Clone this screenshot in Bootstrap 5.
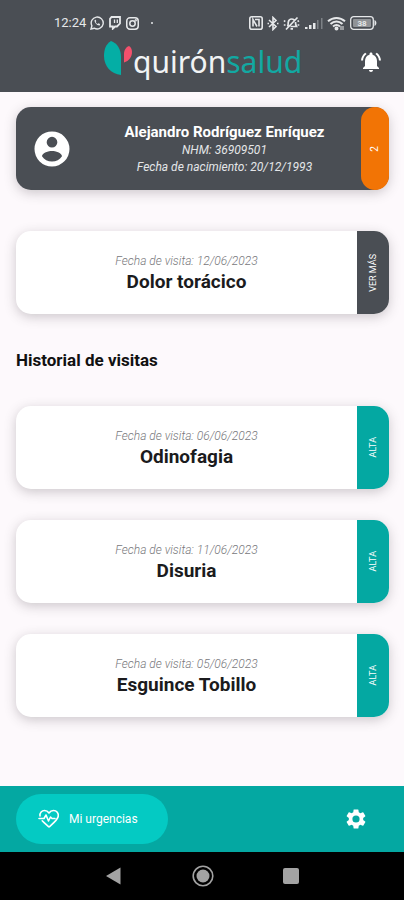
<!DOCTYPE html>
<html lang="es">
<head>
<meta charset="utf-8">
<meta name="viewport" content="width=device-width, initial-scale=1">
<title>Mi urgencias</title>
<link href="https://cdn.jsdelivr.net/npm/bootstrap@5.3.0/dist/css/bootstrap.min.css" rel="stylesheet">
<style>
  :root { --slate: #4a4e54; --teal: #04a8a2; --aqua: #04cac3; --orange: #f27405; }
  body { font-family: Roboto, "Noto Sans", sans-serif; background: #fdf9fc; color: #1b1b1d; }
  svg { display: block; flex: none; }
  .app-head { background: var(--slate); height: 92px; color: #fff; padding: 14px 27px 0 54px; }
  .status { height: 18px; font-size: 13px; line-height: 18px; color: #e6e8ea; }
  .brand-row { height: 60px; padding-left: 50px; margin-right: -6px; }
  .brand { font-family: "Noto Sans", sans-serif; font-size: 30px; line-height: 40px; color: #f1f3f4; }
  .brand-accent { color: #12a8a2; }
  .screen { padding: 15px 15px 0 16px; }
  .tile { height: 83px; border-radius: 15px; box-shadow: 0 3px 12px rgba(60, 50, 60, .25); background: #fff; }
  .tile-patient { background: var(--slate); color: #fff; padding-left: 16px; }
  .tile-name { font-size: 15px; line-height: 20px; font-weight: 700; }
  .tile-meta { font-size: 12px; line-height: 17px; font-style: italic; color: #e4e6e8; }
  .tile-date { font-size: 12px; line-height: 18px; font-style: italic; font-weight: 300; color: #77777b; }
  .tile-title { font-size: 19px; line-height: 24px; font-weight: 700; }
  .side { width: 32px; border: 0; border-radius: 0 15px 15px 0; color: #fff; font-size: 9px; line-height: 12px; background: var(--teal); }
  .side-dark { background: var(--slate); }
  .side-level { width: 28px; border-radius: 14px; background: var(--orange); font-size: 10px; }
  .side-text { writing-mode: vertical-rl; transform: rotate(180deg); }
  .section-title { font-size: 17px; line-height: 20px; font-weight: 700; color: #111; }
  .gap-first { margin-top: 41px; }
  .gap-title { margin: 36px 0; }
  .visits { gap: 31px; }
  .tabs { background: var(--teal); height: 66px; padding: 0 36px 0 16px; }
  .tab-pill { width: 152px; height: 50px; border-radius: 25px; background: var(--aqua); color: #fff; font-size: 12px; gap: 9px; padding-left: 22px; }
  .sys { background: #000; height: 48px; padding: 0 104px 0 105px; }
</style>
<script src="https://cdn.jsdelivr.net/npm/bootstrap@5.3.0/dist/js/bootstrap.bundle.min.js"></script>
</head>
<body class="d-flex flex-column min-vh-100">
<header class="app-head">
  <div class="status d-flex align-items-center justify-content-between">
    <div class="d-flex align-items-center">
      <span>12:24</span>
      <svg class="ms-1" width="14" height="14" viewBox="0 0 14 14" fill="none" stroke="#e6e8ea" stroke-width="1.4"><path d="M1 13l.9-3.2A6 6 0 1 1 4.200 12.200Z"/><path d="M4.600 4c-.5 2.500 2.500 5.800 5.200 5.400l.3-1.300-1.700-.8-.8.7c-.9-.4-1.500-1-1.900-1.900l.6-.8-.6-1.500Z" fill="#e6e8ea" stroke="none"/></svg>
      <svg class="ms-1" width="14" height="14" viewBox="-1 0 14 14" fill="none" stroke="#e6e8ea" stroke-width="1.8"><path d="M2.500 1H11v6.500L8 10.500H6L3.800 12.700V10.500H1V2.800Z"/><path d="M5.500 3.500V7M8.300 3.500V7" stroke-width="1.300"/></svg>
      <svg class="ms-1" width="13" height="13" viewBox="0 0 12 12" fill="none" stroke="#e6e8ea" stroke-width="1.400"><rect x=".7" y=".7" width="10.600" height="10.600" rx="3"/><circle cx="6" cy="6" r="2.500"/><circle cx="9" cy="3" r=".4"/></svg>
      <svg class="ms-2" width="8" height="4" viewBox="0 0 8 4"><circle cx="5" cy="2" r="1" fill="#e6e8ea"/></svg>
    </div>
    <div class="d-flex align-items-center gap-1">
      <svg width="14" height="14" viewBox="0 0 14 14" fill="none" stroke="#e6e8ea" stroke-width="1.600"><rect x=".8" y=".8" width="12.400" height="12.400" rx="2"/><path d="M4 10.500V3.500l4 7M6 3.500h4v7"/></svg>
      <svg width="12" height="15" viewBox="0 0 12 15" fill="none" stroke="#e6e8ea" stroke-width="1.600"><path d="M2 4l7 6.500L6 13.500V1.500l3 3L2 11"/><path d="M.5 7.500h1.500M10 7.500h1.500"/></svg>
      <svg width="17" height="15" viewBox="0 0 17 15" fill="none" stroke="#e6e8ea" stroke-width="1.700"><path d="M4.500 10.500c1-1.500.5-3 .8-4.500.4-2 1.800-3 3.400-3 1 0 1.800.4 2.500 1M12.500 6c0 2 .1 3 1 4.500H7.500M7.500 12.800h2.500M3 13.500L14.500 1.500M1 4.500l1.200 1.200M.8 9h1.700M14.600 9h1.700M14.500 5.500l1.500-.8"/></svg>
      <svg width="19" height="13" viewBox="0 0 19 13"><path d="M1 10h2.500v2H1zM5 8h2.500v4H5zM9 6h2.500v6H9z" fill="#e6e8ea"/><path d="M13 3h1.500v9H13zM17 1h1.500v11H17z" fill="#7d8186"/></svg>
      <svg width="19" height="15" viewBox="0 0 19 15" fill="none" stroke="#e6e8ea" stroke-width="2"><path d="M1 5.300c5-4.400 12-4.400 17 0M3.500 8c3.600-3.200 8.400-3.200 12 0M6 10.500c2.200-1.800 4.800-1.800 7 0"/><circle cx="9.500" cy="12.500" r="1"/><path d="M14 10v4M16 10v4" stroke-width="1"/></svg>
      <svg width="27" height="14" viewBox="0 0 27 14"><rect x=".7" y=".7" width="22.600" height="12.600" rx="3" fill="none" stroke="#e6e8ea" stroke-width="1.300"/><rect x="3" y="3" width="18" height="8" rx="1" fill="#909397"/><path d="M24.500 4c2.500 1 2.500 5 0 6Z" fill="#e6e8ea"/><text x="12" y="10" text-anchor="middle" font-family="Roboto, sans-serif" font-size="8" font-weight="700" fill="#e6e8ea">38</text></svg>
    </div>
  </div>
  <div class="brand-row d-flex align-items-center">
    <svg class="mb-2" width="29" height="36" viewBox="0 0 29 36"><path d="M7 1C2 4 0 9 0 16C0 26 7 34 17 35V17C17 9 13 3 7 1Z" fill="#04aea5"/><path d="M25 6c-3 1-5 4-5 8v8.500c5-1.500 8-5.500 8-10.500 0-2.500-1-5-3-6Z" fill="#f4506c"/></svg>
    <span class="brand">quirón<span class="brand-accent">salud</span></span>
    <button type="button" class="btn p-0 border-0 ms-auto" aria-label="Notificaciones">
      <svg width="24" height="24" viewBox="0 0 24 24" fill="#fff"><path d="M7.580 4.080L6.150 2.650C3.750 4.480 2.170 7.300 2.030 10.500h2c.15-2.650 1.510-4.970 3.550-6.420zM19.970 10.500h2c-.15-3.200-1.730-6.020-4.120-7.850l-1.420 1.430c2.020 1.450 3.390 3.770 3.540 6.420zM18 11c0-3.070-1.640-5.640-4.500-6.320V4c0-.83-.67-1.500-1.500-1.500s-1.500.67-1.500 1.500v.68C7.630 5.360 6 7.920 6 11v5l-2 2v1h16v-1l-2-2v-5zM12 22c1.100 0 2-.9 2-2h-4c0 1.100.9 2 2 2z"/></svg>
    </button>
  </div>
</header>

<main class="screen flex-grow-1">
  <section class="tile tile-patient d-flex">
    <svg class="align-self-center" width="40" height="40" viewBox="0 0 24 24" fill="#fff"><path d="M12 1.500a10.500 10.500 0 1 0 0 21 10.500 10.500 0 0 0 0-21zm0 3.200a3.200 3.200 0 1 1 0 6.400 3.200 3.200 0 0 1 0-6.400zM12 19.500c-2.500 0-4.700-1.200-6-3.200.1-2 4-3.100 6-3.100s5.900 1.100 6 3.100c-1.300 2-3.500 3.200-6 3.200z"/></svg>
    <div class="flex-grow-1 text-center align-self-center ps-3">
      <h1 class="tile-name mb-0">Alejandro Rodríguez Enríquez</h1>
      <div class="tile-meta">NHM: 36909501</div>
      <div class="tile-meta">Fecha de nacimiento: 20/12/1993</div>
    </div>
    <div class="side side-level d-flex align-items-center justify-content-center"><span class="side-text">2</span></div>
  </section>

  <article class="tile d-flex gap-first">
    <div class="flex-grow-1 text-center align-self-center">
      <div class="tile-date">Fecha de visita: 12/06/2023</div>
      <h2 class="tile-title mb-0">Dolor torácico</h2>
    </div>
    <button type="button" class="side side-dark d-flex align-items-center justify-content-center p-0"><span class="side-text">VER MÁS</span></button>
  </article>

  <h2 class="section-title gap-title">Historial de visitas</h2>

  <div class="visits d-flex flex-column">
    <article class="tile d-flex">
      <div class="flex-grow-1 text-center align-self-center">
        <div class="tile-date">Fecha de visita: 06/06/2023</div>
        <h3 class="tile-title mb-0">Odinofagia</h3>
      </div>
      <button type="button" class="side d-flex align-items-center justify-content-center p-0"><span class="side-text">ALTA</span></button>
    </article>
    <article class="tile d-flex">
      <div class="flex-grow-1 text-center align-self-center">
        <div class="tile-date">Fecha de visita: 11/06/2023</div>
        <h3 class="tile-title mb-0">Disuria</h3>
      </div>
      <button type="button" class="side d-flex align-items-center justify-content-center p-0"><span class="side-text">ALTA</span></button>
    </article>
    <article class="tile d-flex">
      <div class="flex-grow-1 text-center align-self-center">
        <div class="tile-date">Fecha de visita: 05/06/2023</div>
        <h3 class="tile-title mb-0">Esguince Tobillo</h3>
      </div>
      <button type="button" class="side d-flex align-items-center justify-content-center p-0"><span class="side-text">ALTA</span></button>
    </article>
  </div>
</main>

<nav class="tabs d-flex align-items-center justify-content-between" aria-label="Principal">
  <button type="button" class="tab-pill border-0 d-flex align-items-center">
    <svg width="22" height="20" viewBox="0 0 22 20" fill="none" stroke="#fff" stroke-width="1.600" stroke-linejoin="round" stroke-linecap="round"><path d="M2 7C1.500 3.500 4 1.500 6.500 1.500c2 0 3.500 1 4.500 2.500 1-1.500 2.500-2.500 4.500-2.500C18.500 1.500 21 4 20.200 7.500 19.500 11 15 14.500 11 18 8.500 15.800 6 13.800 4.200 11.800"/><path d="M1 9.500h5l2-3.500 2.500 6 2-4 1.500 1.500h3"/></svg>
    <span>Mi urgencias</span>
  </button>
  <button type="button" class="btn p-0 border-0" aria-label="Ajustes">
    <svg width="24" height="24" viewBox="0 0 24 24" fill="#fff"><path d="M19.140 12.940c.04-.3.06-.61.06-.94 0-.32-.02-.64-.07-.94l2.030-1.580a.49.49 0 0 0 .12-.61l-1.920-3.320a.488.488 0 0 0-.59-.22l-2.390.96c-.5-.38-1.030-.7-1.620-.94l-.36-2.540a.484.484 0 0 0-.48-.41h-3.840c-.24 0-.43.17-.47.41l-.36 2.540c-.59.24-1.130.57-1.620.94l-2.390-.96c-.22-.08-.47 0-.59.22L2.740 8.870c-.12.21-.08.47.12.61l2.030 1.580c-.05.3-.09.63-.09.94s.02.64.07.94l-2.030 1.580a.49.49 0 0 0-.12.61l1.920 3.320c.12.22.37.29.59.22l2.390-.96c.5.38 1.030.7 1.620.94l.36 2.540c.05.24.24.41.48.41h3.840c.24 0 .44-.17.47-.41l.36-2.540c.59-.24 1.130-.56 1.620-.94l2.390.96c.22.08.47 0 .59-.22l1.920-3.320c.12-.22.07-.47-.12-.61l-2.010-1.580zM12 15.600A3.600 3.600 0 1 1 12 8.400a3.600 3.600 0 0 1 0 7.200z"/></svg>
  </button>
</nav>
<footer class="sys d-flex align-items-center justify-content-between">
  <button type="button" class="btn p-0 border-0" aria-label="Atrás"><svg width="17" height="20" viewBox="0 0 17 20"><path d="M1 10L15.500 1.500v17Z" fill="#a3a3a3"/></svg></button>
  <button type="button" class="btn p-0 border-0" aria-label="Inicio"><svg width="22" height="22" viewBox="0 0 22 22"><circle cx="11" cy="11" r="9.800" fill="none" stroke="#a3a3a3" stroke-width="1.600"/><circle cx="11" cy="11" r="6.500" fill="#a3a3a3"/></svg></button>
  <button type="button" class="btn p-0 border-0" aria-label="Recientes"><svg width="17" height="16" viewBox="0 0 17 16"><rect width="16" height="16" rx="2" fill="#a3a3a3"/></svg></button>
</footer>
</body>
</html>
